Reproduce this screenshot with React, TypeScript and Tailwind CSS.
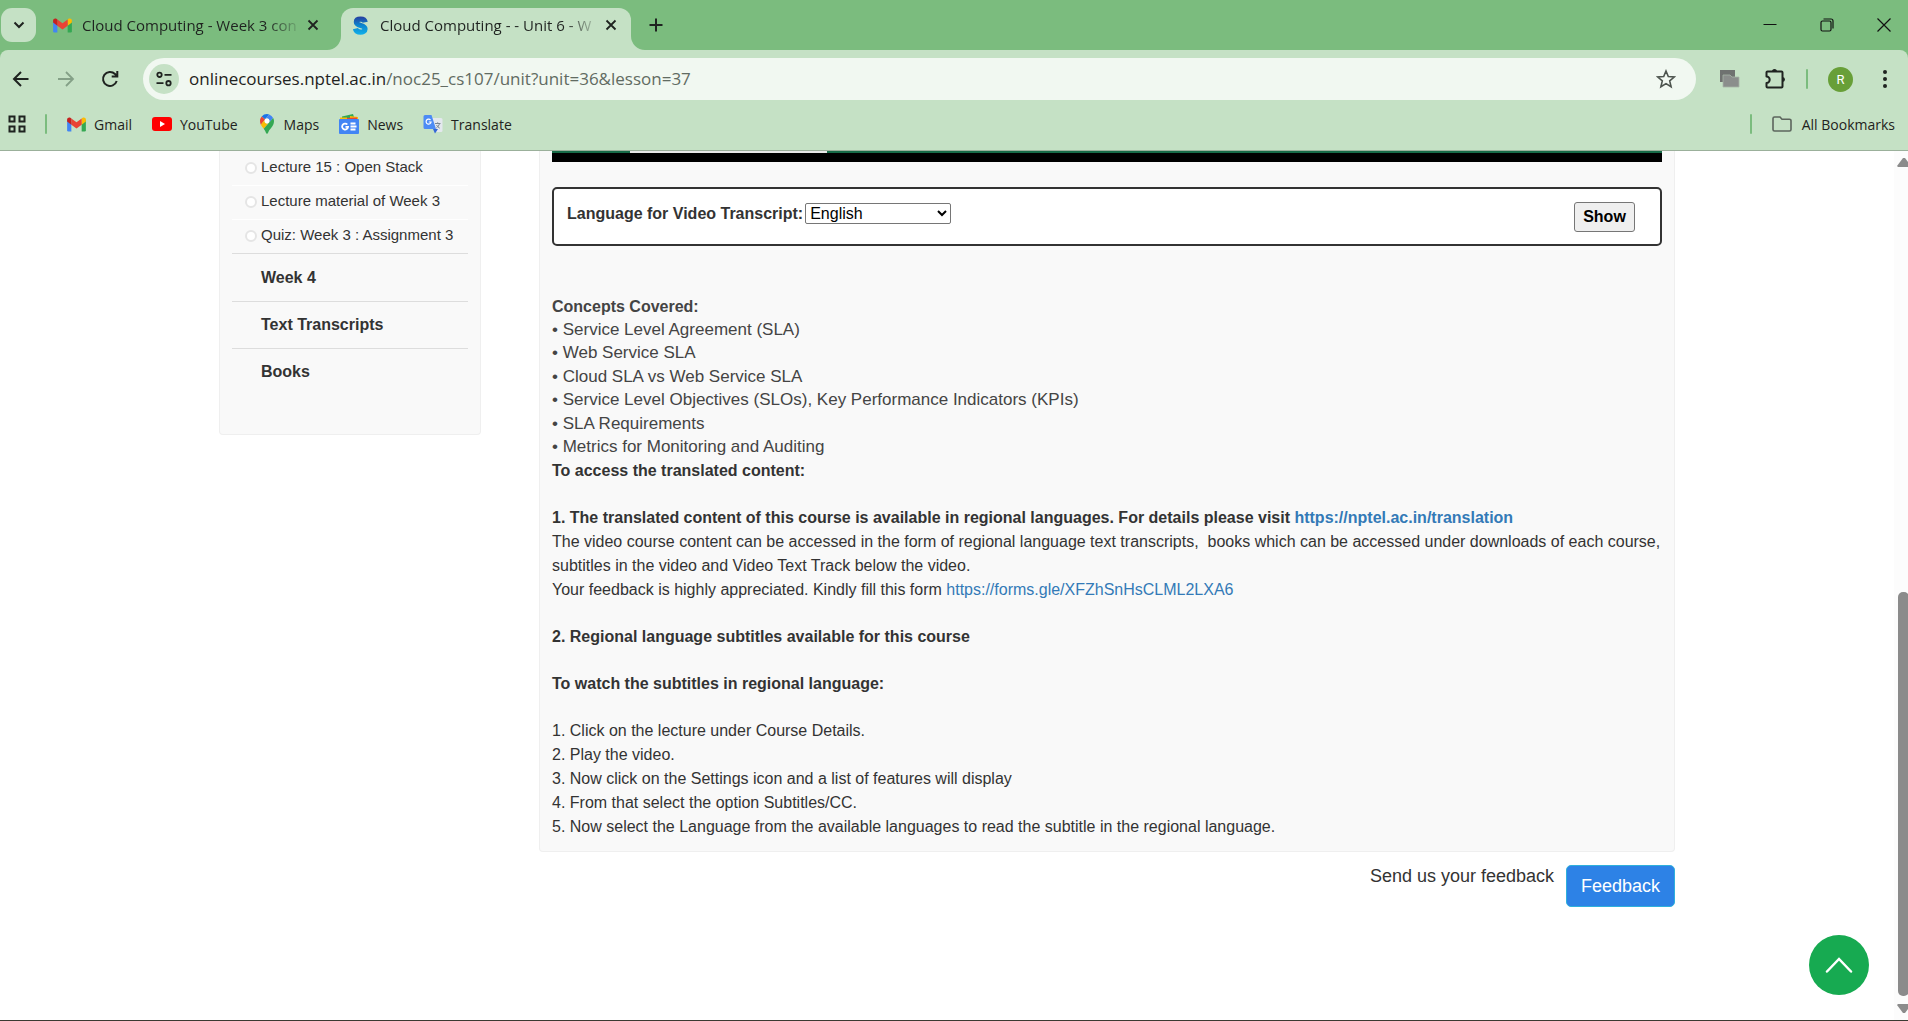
import React, { useState } from "react";

const Gmail = () => (
  <svg viewBox="0 0 20 16" className="h-[15px] w-[19px] shrink-0" aria-hidden="true">
    <path d="M0 3v11a1.4 1.4 0 0 0 1.4 1.4h3.1V6z" fill="#4285f4" />
    <path d="M20 3v11a1.4 1.4 0 0 1-1.4 1.4h-3.1V6z" fill="#34a853" />
    <path d="M15.5 8.2V1.7l1-.8C18 0 20 1 20 2.7v2.1z" fill="#fbbc04" />
    <path d="M4.5 8.2V1.6L10 5.7l5.5-4.1v6.6L10 12.3z" fill="#ea4335" />
    <path d="M0 2.7v2.1l4.5 3.4V1.7l-1-.8C2 0 0 1 0 2.7z" fill="#c5221f" />
  </svg>
);

const YouTube = () => (
  <svg viewBox="0 0 20 14" className="h-[14px] w-5 shrink-0" aria-hidden="true">
    <rect width="20" height="14" rx="3" fill="#f00" />
    <path d="M8 4v6l5-3z" fill="#fff" />
  </svg>
);

const Maps = () => (
  <svg viewBox="0 0 16 20" className="h-5 w-[18px] shrink-0" aria-hidden="true">
    <path d="M8 0a7 7 0 0 0-5.3 2.4L6 5.2 10.2.4A7 7 0 0 0 8 0z" fill="#1a73e8" />
    <path d="M2.7 2.4A6.900 6.900 0 0 0 1 7c0 1.500.3 2.600.9 3.700L6 5.500z" fill="#ea4335" />
    <path d="M10.200.4 6 5.300a2.700 2.700 0 0 1 4.100 3.500l4-4.800A7 7 0 0 0 10.200.4z" fill="#4285f4" />
    <path d="M8 9.700a2.700 2.700 0 0 1-2-4.500l-4.100 5.500c.7 1.400 1.700 2.600 2.800 4l5.400-6A2.700 2.700 0 0 1 8 9.700z" fill="#fbbc04" />
    <path d="M10 8.700l-5.300 6c1.300 1.700 1.900 2.800 2.300 4.300.3 1 1.700 1 2 0 .7-2.400 2-3.700 3.300-5.300C13.800 11.700 15 10 15 7c0-1.100-.3-2.100-.8-3z" fill="#34a853" />
    <circle cx="8" cy="7" r="2.400" fill="#fff" />
  </svg>
);

const News = () => (
  <svg viewBox="0 0 20 20" className="h-5 w-5 shrink-0" aria-hidden="true">
    <path d="M3 2.500 14 0l2 6H3z" fill="#34a853" />
    <path d="M11 2l8 1v5h-8z" fill="#fbbc04" />
    <path d="M7 4l11-.5V8H7z" fill="#ea4335" />
    <path d="M1 3.500h7V7H1z" fill="#fbbc04" />
    <rect y="5" width="20" height="15" rx="1" fill="#4285f4" />
    <path d="M8.300 10.500a3 3 0 1 0 .8 2.300H6.500" fill="none" stroke="#fff" strokeWidth="1.800" />
    <path d="M11.500 9.500h5M11.500 12.500h6M11.500 15.500h5" stroke="#fff" strokeWidth="1.800" />
  </svg>
);

const Translate = () => (
  <svg viewBox="0 0 20 20" className="h-5 w-5 shrink-0" aria-hidden="true">
    <path d="M7 4h11a1.500 1.500 0 0 1 1.500 1.500v11A1.500 1.500 0 0 1 18 18h-6z" fill="#e4e8ee" />
    <path d="M10 15h5l-3 4.500z" fill="#3367d6" />
    <path d="M2 1h6.500l4.500 14H2A1.500 1.500 0 0 1 .5 13.500v-11A1.500 1.500 0 0 1 2 1z" fill="#4c8bf5" />
    <path d="M7.500 6a2.500 2.500 0 1 0 .6 2H5.800" fill="none" stroke="#fff" strokeWidth="1.200" />
    <path d="M12 9.500h5.500M14.700 8.300v1.200M16.500 9.500c-.4 2-1.800 3.500-3.200 4.500M13.500 11c.8 1.500 2 2.500 3.300 3.200" fill="none" stroke="#7a8794" strokeWidth="1" />
  </svg>
);

const Swayam = () => (
  <svg viewBox="0 0 16 20" className="h-[19px] w-[15px] shrink-0" aria-hidden="true">
    <defs>
      <linearGradient id="sw" gradientUnits="userSpaceOnUse" x1="0" y1="0" x2="0" y2="20">
        <stop offset="0" stopColor="#283a9c" />
        <stop offset="0.5" stopColor="#0b86cf" />
        <stop offset="1" stopColor="#12b1ea" />
      </linearGradient>
    </defs>
    <path d="M13 6.500C12.500 4 10.500 3.200 8.200 3.200 5.500 3.200 3.600 4.300 3.600 6.200c0 4.600 9.200 2.800 9.200 7.400 0 2.200-2.200 3.400-4.800 3.400-2.800 0-4.800-1-5.400-3.600" fill="none" stroke="url(#sw)" strokeWidth="5.600" />
  </svg>
);

const Cross = () => (
  <svg viewBox="0 0 12 12" className="h-3 w-3" fill="none" stroke="#1f2320" strokeWidth="1.800" aria-hidden="true">
    <path d="M1.500 1.500l9 9M10.500 1.500l-9 9" />
  </svg>
);

const bookmarks = [
  { label: "Gmail", icon: <Gmail /> },
  { label: "YouTube", icon: <YouTube /> },
  { label: "Maps", icon: <Maps /> },
  { label: "News", icon: <News /> },
  { label: "Translate", icon: <Translate /> },
];

function TabStrip() {
  return (
    <div className="flex h-[50px] pl-px">
      <button aria-label="Search tabs" className="mt-2 flex h-[34px] w-[35px] items-center justify-center rounded-[11px] bg-[#c5e1c5]">
        <svg viewBox="0 0 12 12" className="h-3 w-3" fill="none" stroke="#1f2320" strokeWidth="2" aria-hidden="true">
          <path d="M1.500 3.500 6 8l4.500-4.500" />
        </svg>
      </button>
      <div className="flex w-[305px] items-center pl-[17px] pr-[22px]">
        <Gmail />
        <span className="ml-2.5 flex-1 whitespace-nowrap text-[15px] [mask-image:linear-gradient(to_right,#000_82%,transparent_98%)]">
          Cloud Computing - Week 3 con
        </span>
        <button aria-label="Close tab"><Cross /></button>
      </div>
      <div className="relative mt-2 flex w-[290px] items-center rounded-t-[12px] bg-[#c5e1c5] pb-2 pl-3 pr-3.5">
        <svg viewBox="0 0 14 14" className="absolute -left-3.5 bottom-0 h-3.5 w-3.5" aria-hidden="true">
          <path d="M14 0v14H0A14 14 0 0 0 14 0z" fill="#c5e1c5" />
        </svg>
        <svg viewBox="0 0 14 14" className="absolute -right-3.5 bottom-0 h-3.5 w-3.5" aria-hidden="true">
          <path d="M0 0v14h14A14 14 0 0 1 0 0z" fill="#c5e1c5" />
        </svg>
        <Swayam />
        <span className="ml-3 flex-1 whitespace-nowrap text-[15px] [mask-image:linear-gradient(to_right,#000_82%,transparent_98%)]">
          Cloud Computing - - Unit 6 - W
        </span>
        <button aria-label="Close tab"><Cross /></button>
      </div>
      <button aria-label="New tab" className="ml-[18px]">
        <svg viewBox="0 0 14 14" className="h-3.5 w-3.5" stroke="#1f2320" strokeWidth="2" aria-hidden="true">
          <path d="M7 .5v13M.5 7h13" />
        </svg>
      </button>
      <div className="ml-auto flex items-center gap-[43px] pr-[17px]">
        <button aria-label="Minimize">
          <svg viewBox="0 0 14 14" className="h-3.5 w-3.5" stroke="#111" aria-hidden="true"><path d="M.5 6.500h13" /></svg>
        </button>
        <button aria-label="Restore">
          <svg viewBox="0 0 14 14" className="h-3.5 w-3.5" fill="none" stroke="#111" strokeWidth="1.200" aria-hidden="true">
            <rect x="1" y="3" width="10" height="10" rx="1.500" />
            <path d="M3.500 1H11a2 2 0 0 1 2 2v7.500" />
          </svg>
        </button>
        <button aria-label="Close window">
          <svg viewBox="0 0 14 14" className="h-3.5 w-3.5" stroke="#111" strokeWidth="1.200" aria-hidden="true"><path d="M.5 .5l13 13M13.500 .5l-13 13" /></svg>
        </button>
      </div>
    </div>
  );
}

function Toolbar() {
  return (
    <div className="flex h-[58px] items-center rounded-t-lg bg-[#c5e1c5] pl-3 pr-[21px]">
      <button aria-label="Back">
        <svg viewBox="0 0 18 18" className="h-[18px] w-[18px]" fill="none" stroke="#1f2320" strokeWidth="2" aria-hidden="true"><path d="M16.500 9H2M9 2 2 9l7 7" /></svg>
      </button>
      <button aria-label="Forward" className="ml-[27px]">
        <svg viewBox="0 0 18 18" className="h-[18px] w-[18px]" fill="none" stroke="#84a087" strokeWidth="1.800" aria-hidden="true"><path d="M1 9h15M9 2l7 7-7 7" /></svg>
      </button>
      <button aria-label="Reload" className="ml-[26px]">
        <svg viewBox="0 0 18 18" className="h-[18px] w-[18px]" fill="none" stroke="#1f2320" strokeWidth="2" aria-hidden="true">
          <path d="M15.700 11A7 7 0 1 1 14 4l2 2M16.300 1v5.600h-5.600" />
        </svg>
      </button>
      <div className="ml-6 flex h-[42px] flex-1 items-center rounded-full bg-[#f1f8f1] pl-1.5 pr-5">
        <button aria-label="View site information" className="flex h-[30px] w-[30px] items-center justify-center rounded-full bg-[#c5e1c5]">
          <svg viewBox="0 0 16 16" className="h-4 w-4" fill="none" stroke="#1f2320" strokeWidth="1.800" aria-hidden="true">
            <circle cx="3.500" cy="3.800" r="2.200" /><path d="M8.500 3.800h7M.5 12.200h7" /><circle cx="12.500" cy="12.200" r="2.200" />
          </svg>
        </button>
        <a href="#top" className="ml-2.5 flex-1 text-[17px] leading-6 text-[#1f2320]">
          onlinecourses.nptel.ac.in<span className="text-[#616b62]">/noc25_cs107/unit?unit=36&amp;lesson=37</span>
        </a>
        <button aria-label="Bookmark this tab">
          <svg viewBox="0 0 20 20" className="h-5 w-5" fill="none" stroke="#4d544e" strokeWidth="1.600" aria-hidden="true">
            <path d="M10 2l2.300 5.500 6 .5-4.600 3.900 1.400 5.800L10 14.600l-5.100 3.100 1.400-5.800L1.700 8l6-.5z" />
          </svg>
        </button>
      </div>
      <button aria-label="Screen extension" className="ml-6">
        <svg viewBox="0 0 20 18" className="h-[18px] w-5" aria-hidden="true">
          <path d="M0 0h15v12H0z" fill="#6f7270" /><path d="M3 5h7l2 2h7v10H3z" fill="#8b8e8c" stroke="#a7b5a7" strokeWidth=".8" />
        </svg>
      </button>
      <button aria-label="Extensions" className="ml-[25px]">
        <svg viewBox="0 0 22 22" className="h-[22px] w-[22px]" fill="none" stroke="#1f2320" strokeWidth="2" strokeLinejoin="round" aria-hidden="true">
          <path d="M2.500 3.500h14a1 1 0 0 1 1 1v14a1 1 0 0 1-1 1h-14a1 1 0 0 1-1-1V15a3.200 3.200 0 0 0 0-6.400V4.500a1 1 0 0 1 1-1z" />
          <path d="M7 3.500a2.500 2.500 0 0 1 5 0zM17.500 9a2.500 2.500 0 0 1 0 5z" fill="#1f2320" stroke="none" />
        </svg>
      </button>
      <span className="ml-[19px] h-5 w-0.5 rounded bg-[#7bbc7e]" />
      <button aria-label="Profile" className="ml-5 h-[25px] w-[25px] rounded-full bg-[#689f38] font-['Roboto',sans-serif] text-[13px] leading-[25px] text-white">R</button>
      <button aria-label="Menu" className="ml-[30px]">
        <svg viewBox="0 0 4 18" className="h-[18px] w-1" fill="#1f2320" aria-hidden="true"><circle cx="2" cy="2" r="2" /><circle cx="2" cy="9" r="2" /><circle cx="2" cy="16" r="2" /></svg>
      </button>
    </div>
  );
}

function BookmarksBar() {
  return (
    <nav aria-label="Bookmarks" className="flex h-[43px] items-center border-b border-[#9bb09b] bg-[#c5e1c5] pb-2.5 pl-2 pr-[13px] text-[14px]">
      <button aria-label="Apps">
        <svg viewBox="0 0 18 18" className="h-[18px] w-[18px]" fill="none" stroke="#1f2320" strokeWidth="2" aria-hidden="true">
          <path d="M1.500 1.500h5v5h-5zM11.500 1.500h5v5h-5zM1.500 11.500h5v5h-5zM11.500 11.500h5v5h-5z" />
        </svg>
      </button>
      <span className="ml-[19px] mr-5 h-5 w-0.5 rounded bg-[#7bbc7e]" />
      <div className="flex items-center gap-5">
        {bookmarks.map((b) => (
          <a key={b.label} href="#top" className="flex items-center gap-2">{b.icon}{b.label}</a>
        ))}
      </div>
      <span className="ml-auto mr-5 h-5 w-0.5 rounded bg-[#7bbc7e]" />
      <a href="#top" className="flex items-center gap-2.5">
        <svg viewBox="0 0 20 16" className="h-4 w-5" fill="none" stroke="#5c655d" strokeWidth="1.600" aria-hidden="true"><path d="M1 2.500A1.500 1.500 0 0 1 2.500 1H8l2 2.200h7.500A1.500 1.500 0 0 1 19 4.700v8.800a1.500 1.500 0 0 1-1.500 1.500h-15A1.500 1.500 0 0 1 1 13.500z" /></svg>
        All Bookmarks
      </a>
    </nav>
  );
}

function Sidebar() {
  return (
    <aside className="w-[262px] shrink-0 self-start rounded-b border border-t-0 border-[#efefef] bg-[#f9f9f9] px-3 pb-[38px]">
      <ul className="pt-px text-[15px] text-[#333]">
        {["Lecture 15 : Open Stack", "Lecture material of Week 3", "Quiz: Week 3 : Assignment 3"].map((t) => (
          <li key={t} className="flex h-[34px] items-center border-b border-white pb-0.5 pl-[13px] last:border-[#ddd]">
            <a href="#top" className="flex items-center gap-1 whitespace-nowrap"><span className="h-3 w-3 rounded-full border-2 border-[#e5e5e5] bg-white" />{t}</a>
          </li>
        ))}
      </ul>
      <ul className="pt-px text-base font-bold text-[#333]">
        {["Week 4", "Text Transcripts", "Books"].map((t) => (
          <li key={t} className="flex h-[47px] items-center border-b border-[#ddd] pl-[29px] last:border-transparent">
            <a href="#top">{t}</a>
          </li>
        ))}
      </ul>
    </aside>
  );
}

function Lesson() {
  const [lang, setLang] = useState("English");
  return (
    <section className="rounded-b border border-t-0 border-[#efefef] bg-[#f9f9f9] px-3 pb-3 text-base text-[#333]">
      <div className="flex h-[11px] flex-col bg-black">
        <div className="flex h-0.5 bg-[#176b48]"><span className="ml-[7%] w-[197px] bg-[#e8e8e8]" /></div>
      </div>
      <form className="mt-[25px] flex h-[59px] items-start rounded-[5px] border-2 border-[#333] bg-white pl-[13px] pr-[25px]" onSubmit={(e) => e.preventDefault()}>
        <label htmlFor="lang" className="mt-[13px] font-bold leading-6">Language for Video Transcript:</label>
        <select id="lang" value={lang} onChange={(e) => setLang(e.target.value)} className="ml-0.5 mt-3.5 h-[21px] w-[146px] rounded-[2px] border border-[#767676] bg-white text-base leading-[19px] text-black">
          <option>English</option>
          <option>Hindi</option>
        </select>
        <button className="ml-auto mt-[13px] h-[30px] w-[61px] rounded-[3px] border border-[#767676] bg-[#efefef] font-bold text-black">Show</button>
      </form>
      <div className="mt-[49px] text-[#444]">
        <h2 className="font-bold leading-[23px]">Concepts Covered:</h2>
        <ul className="text-[17px] leading-6">
          {["Service Level Agreement (SLA)", "Web Service SLA", "Cloud SLA vs Web Service SLA", "Service Level Objectives (SLOs), Key Performance Indicators (KPIs)", "SLA Requirements", "Metrics for Monitoring and Auditing"].map((t) => (
            <li key={t} className="odd:leading-[23px]">• {t}</li>
          ))}
        </ul>
      </div>
      <div className="leading-6">
        <h3 className="font-bold">To access the translated content:</h3>
        <p className="mt-[23px] font-bold">1. The translated content of this course is available in regional languages. For details please visit <a href="#top" className="text-[#337ab7]">https://nptel.ac.in/translation</a></p>
        <p>The video course content can be accessed in the form of regional language text transcripts,&nbsp; books which can be accessed under downloads of each course, subtitles in the video and Video Text Track below the video.</p>
        <p>Your feedback is highly appreciated. Kindly fill this form <a href="#top" className="text-[#337ab7]">https://forms.gle/XFZhSnHsCLML2LXA6</a></p>
        <h3 className="mt-[23px] font-bold">2. Regional language subtitles available for this course</h3>
        <h3 className="mt-[23px] font-bold">To watch the subtitles in regional language:</h3>
        <ol className="mt-[23px]">
          {["Click on the lecture under Course Details.", "Play the video.", "Now click on the Settings icon and a list of features will display", "From that select the option Subtitles/CC.", "Now select the Language from the available languages to read the subtitle in the regional language."].map((t, i) => (
            <li key={t}>{i + 1}. {t}</li>
          ))}
        </ol>
      </div>
    </section>
  );
}

export default function App() {
  return (
    <div id="top" className="flex min-h-screen flex-col border-b border-[#3a3a32] bg-white">
      <header className="bg-[#7bbc7e] font-['Open_Sans','Noto_Sans',sans-serif] text-[#1f2320]">
        <TabStrip />
        <Toolbar />
        <BookmarksBar />
      </header>
      <div className="relative flex flex-1 font-['Liberation_Sans',Arial,sans-serif]">
        <main className="flex flex-1 justify-center">
          <div className="flex w-full max-w-[1456px] gap-[58px]">
            <Sidebar />
            <div className="min-w-0 flex-1">
              <Lesson />
              <div className="mt-[13px] flex items-start justify-end gap-3 text-lg text-[#333]">
                <span className="leading-[22px]">Send us your feedback</span>
                <button className="h-[42px] w-[109px] rounded-[5px] border border-[#2fb0dc] bg-[#2d82e6] text-white">Feedback</button>
              </div>
            </div>
          </div>
        </main>
        <button aria-label="Back to top" className="absolute bottom-[25px] right-[39px] flex h-[60px] w-[60px] items-center justify-center rounded-full bg-[#17aa51]">
          <svg viewBox="0 0 28 16" className="h-4 w-7" fill="none" stroke="#fff" strokeWidth="2.500" strokeLinecap="round" aria-hidden="true"><path d="M2 14.500 14 2l12 12.500" /></svg>
        </button>
        <div className="flex w-3.5 flex-col overflow-hidden bg-[#fcfcfc] pl-[3px]" aria-hidden="true">
          <svg viewBox="0 0 14 10" className="mt-1.5 h-2.5 w-3.5 shrink-0" fill="#8b8b8b"><path d="M0 9 6 1h2l6 8-1 1H1z" /></svg>
          <div className="flex-[426]" />
          <div className="ml-px w-[11px] flex-[405] rounded-[5px] bg-[#8b8b8b]" />
          <svg viewBox="0 0 14 10" className="mb-1.5 mt-2 h-2.5 w-3.5 shrink-0" fill="#8b8b8b"><path d="M0 1 6 9h2l6-8-1-1H1z" /></svg>
        </div>
      </div>
    </div>
  );
}
